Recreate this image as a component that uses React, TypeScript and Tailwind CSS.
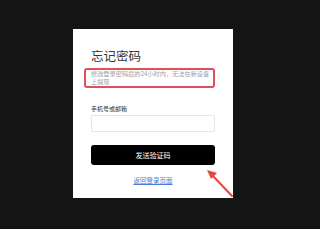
export default function App() {
  return (
    <div
      className="relative w-[320px] h-[229px] bg-[#141414] pl-[73px] pt-[29px] overflow-hidden"
      style={{ fontFamily: '"Noto Sans CJK SC", "Noto Sans", sans-serif' }}
    >
      {/* Card */}
      <div className="w-[160px] h-[169px] bg-white px-[18px] pt-[20px]">
        <h1 className="text-[12.5px] leading-[14px] text-[#333] font-normal">忘记密码</h1>

        {/* Highlighted hint */}
        <div className="mt-[5px] -mx-[7px] w-[131px] h-[20px] border-2 border-[#e0505c] rounded-[3px] pl-[5px] pr-[1px] flex items-center">
          <p className="text-[6.2px] leading-[8px] text-[#a0a0a0]">
            修改登录密码后的24小时内，无法在新设备上提现
          </p>
        </div>

        <label className="block mt-[17px] text-[6px] leading-[8px] text-[#333]">手机号或邮箱</label>
        <div className="mt-[2px] w-[124px] h-[17px] border border-[#e6e6e6] rounded-[1px]" />

        <button className="mt-[13px] w-[124px] h-[20px] bg-black rounded-[3px] text-white text-[7px] leading-[20px] text-center">
          发送验证码
        </button>

        <div className="mt-[11px] text-center text-[6.5px] leading-[8px]">
          <a className="text-[#4a7ad8] underline">返回登录页面</a>
        </div>
      </div>

      {/* Annotation arrow */}
      <svg className="absolute left-0 top-0" width="320" height="229" viewBox="0 0 320 229">
        <line x1="232" y1="196" x2="213" y2="176" stroke="#e8463f" strokeWidth="2" strokeLinecap="round" />
        <polygon points="207,170 217,173 211,179" fill="#e8463f" />
      </svg>
    </div>
  );
}
